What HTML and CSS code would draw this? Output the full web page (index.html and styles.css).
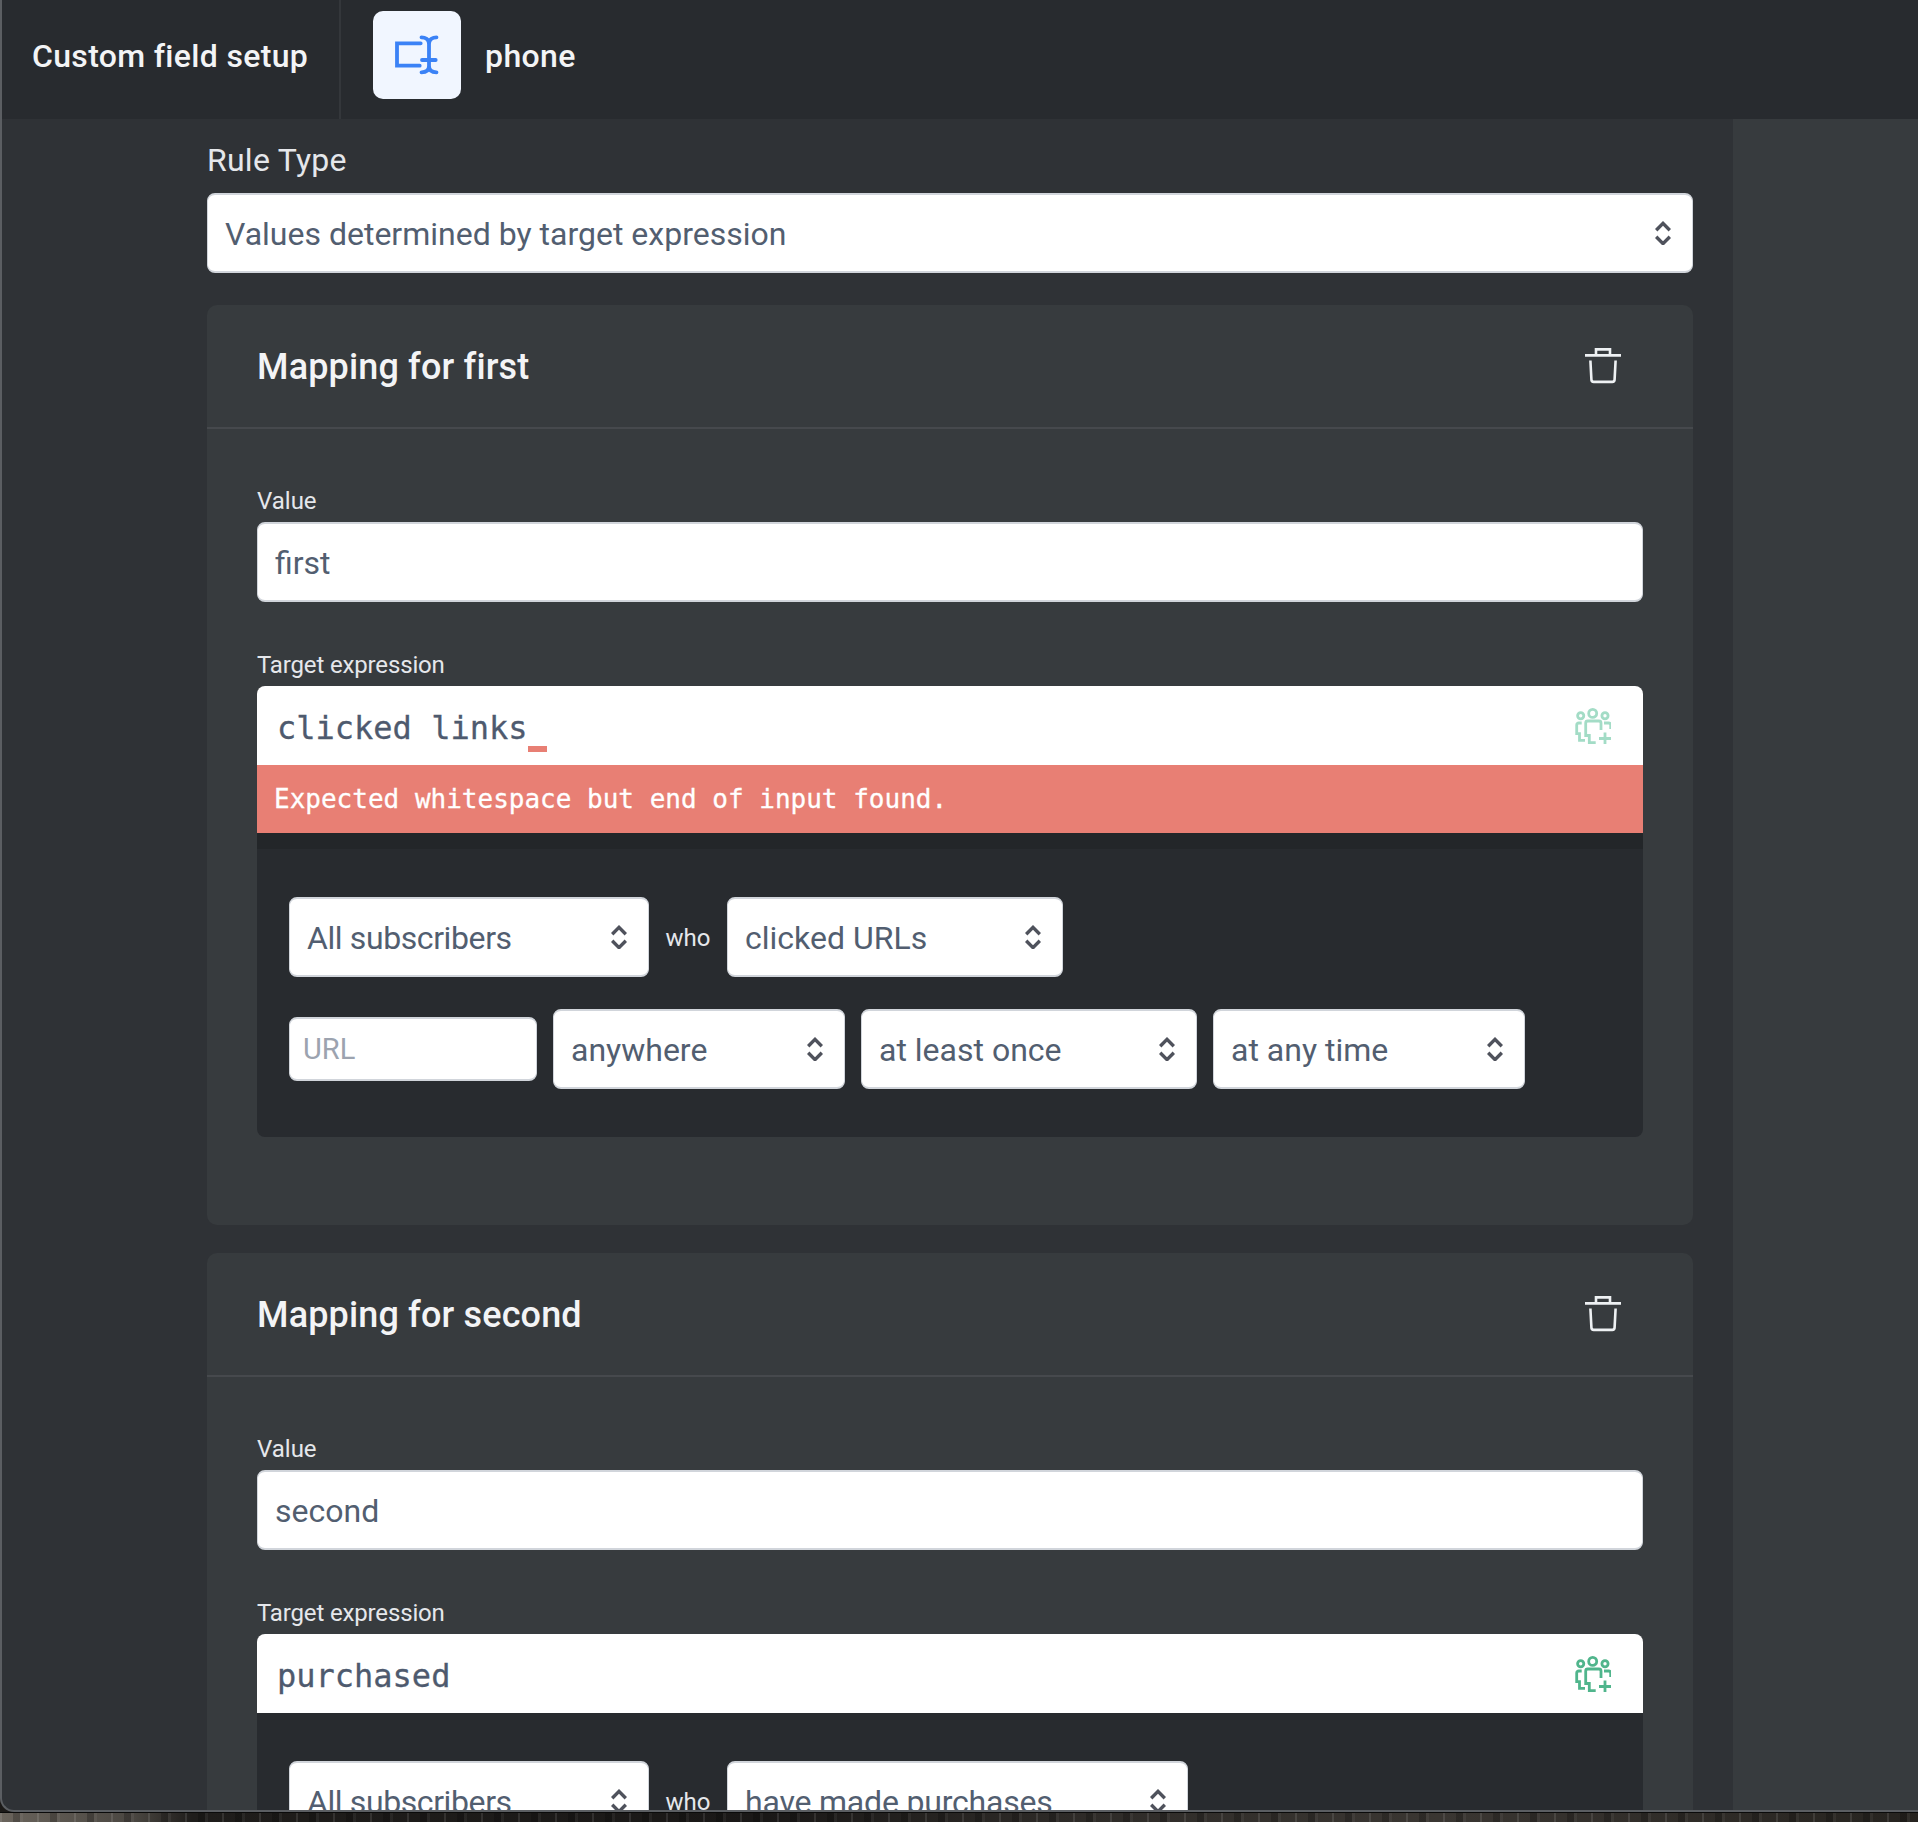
FILE: index.html
```html
<!DOCTYPE html>
<html lang="en">
<head>
<meta charset="utf-8">
<title>Custom field setup</title>
<link rel="stylesheet" href="styles.css">
</head>
<body>
<svg class="defs" width="0" height="0" aria-hidden="true">
  <symbol id="chev" viewBox="0 0 16 24"><path d="M1.2 9.3 8 2.4l6.8 6.9M1.2 15.7 8 22.6l6.8-6.9" fill="none" stroke="currentColor" stroke-width="3.4"/></symbol>
  <symbol id="trash" viewBox="0 0 36 36"><path d="M0 7.4h36M11 7V1.4h14V7M5.4 12.5l1 19a2.4 2.4 0 0 0 2.4 2.4h18.4a2.4 2.4 0 0 0 2.4-2.4l1-19" fill="none" stroke="currentColor" stroke-width="2.6"/></symbol>
  <symbol id="people" viewBox="0 0 36 36"><g fill="none" stroke="currentColor" stroke-width="2.8"><circle cx="17.7" cy="5.4" r="4"/><circle cx="5.7" cy="7.7" r="3.1"/><circle cx="30" cy="7.7" r="3.1"/><path d="M20.7 34.7H14.3V27.5H10.7V15a2 2 0 0 1 2-2H24a2 2 0 0 1 2 2V22M6.7 15H3.7a2 2 0 0 0-2 2V25.7H4.5V32.3H10M29 15h4.7a2 2 0 0 1 2 2v4M30 24.5v12M24 30.5h12"/></g></symbol>
</svg>
<div class="window">
  <header class="topbar">
    <div class="topbar-title">Custom field setup</div>
    <div class="topbar-field">
      <div class="field-badge">
        <svg class="field-icon" viewBox="0 0 88 88"><path d="M47.7 32.3H24V54.7H46.7M48.5 26.3C52 26.3 56 28 56 33V55C56 60 52 61.3 48.5 61.3M63.5 26.3C60 26.3 56 28 56 33M56 55C56 60 60 61.3 63.5 61.3M49 49H62.7" fill="none" stroke="currentColor" stroke-width="3.8" stroke-linecap="round"/></svg>
      </div>
      <span class="field-name">phone</span>
    </div>
  </header>
  <div class="content">
    <main class="main">
      <div class="rule-label">Rule Type</div>
      <div class="select rule-select"><span>Values determined by target expression</span><svg class="chev"><use href="#chev"/></svg></div>

      <section class="card">
        <div class="card-head">
          <h2>Mapping for first</h2>
          <svg class="trash"><use href="#trash"/></svg>
        </div>
        <div class="card-body">
          <div class="label">Value</div>
          <div class="text-input">first</div>
          <div class="label label-target">Target expression</div>
          <div class="editor">
            <span class="code">clicked links<span class="err-mark"></span></span>
            <svg class="people faded"><use href="#people"/></svg>
          </div>
          <div class="error">Expected whitespace but end of input found.</div>
          <div class="builder builder-after-error">
            <div class="row">
              <div class="select w-all"><span>All subscribers</span><svg class="chev"><use href="#chev"/></svg></div>
              <span class="who">who</span>
              <div class="select w-clicked"><span>clicked URLs</span><svg class="chev"><use href="#chev"/></svg></div>
            </div>
            <div class="row">
              <div class="url-input">URL</div>
              <div class="select w-anywhere"><span>anywhere</span><svg class="chev"><use href="#chev"/></svg></div>
              <div class="select w-once"><span>at least once</span><svg class="chev"><use href="#chev"/></svg></div>
              <div class="select w-time"><span>at any time</span><svg class="chev"><use href="#chev"/></svg></div>
            </div>
          </div>
        </div>
      </section>

      <section class="card card-next">
        <div class="card-head">
          <h2>Mapping for second</h2>
          <svg class="trash"><use href="#trash"/></svg>
        </div>
        <div class="card-body">
          <div class="label">Value</div>
          <div class="text-input">second</div>
          <div class="label label-target">Target expression</div>
          <div class="editor">
            <span class="code">purchased</span>
            <svg class="people"><use href="#people"/></svg>
          </div>
          <div class="builder">
            <div class="row">
              <div class="select w-all"><span>All subscribers</span><svg class="chev"><use href="#chev"/></svg></div>
              <span class="who">who</span>
              <div class="select w-purchases"><span>have made purchases</span><svg class="chev"><use href="#chev"/></svg></div>
            </div>
          </div>
        </div>
      </section>
    </main>
    <aside class="side"></aside>
  </div>
</div>
<div class="backdrop"></div>
</body>
</html>
```
FILE: styles.css
```css
* { box-sizing: border-box; }
html, body { margin: 0; height: 1822px; overflow: hidden; }
body {
  background: #1c1a18;
  font-family: Roboto, "Noto Sans", sans-serif;
  color: #e5e7eb;
}
.defs { position: absolute; }
.window {
  height: 1812px;
  border-left: 2px solid #5b5e62;
  border-bottom: 2px solid #5b5e62;
  border-bottom-left-radius: 14px;
  background: #2f3236;
  overflow: hidden;
  display: flex;
  flex-direction: column;
}
.topbar {
  height: 119px;
  flex: none;
  background: #282b2f;
  display: flex;
  align-items: stretch;
}
.topbar-title {
  width: 339px;
  padding: 0 0 7px 30px;
  border-right: 2px solid #34373b;
  display: flex;
  align-items: center;
  font-size: 32px;
  font-weight: 500;
  letter-spacing: .33px;
  color: #f3f4f6;
}
.topbar-field {
  display: flex;
  align-items: center;
  padding: 0 0 7px 32px;
  gap: 24px;
}
.field-badge {
  width: 88px;
  height: 88px;
  border-radius: 10px;
  background: #f1f6ff;
  color: #3b82f6;
  margin-top: -2px;
}
.field-icon { display: block; width: 88px; height: 88px; }
.field-name { font-size: 32px; font-weight: 500; letter-spacing: .4px; color: #f3f4f6; }
.content { flex: 1; display: flex; min-height: 0; }
.main {
  width: 1731px;
  flex: none;
  padding: 21px 40px 0 205px;
}
.side { flex: 1; background: #373b3e; }
.rule-label { font-size: 32px; line-height: 40px; letter-spacing: .25px; color: #e5e7eb; margin-bottom: 13px; }
.select {
  height: 80px;
  flex: none;
  background: #fff;
  border: 2px solid #d1d5db;
  border-left-width: 1px;
  border-right-width: 1px;
  border-radius: 8px;
  padding: 1px 21px 0 17px;
  display: flex;
  align-items: center;
  justify-content: space-between;
  font-size: 32px;
  color: #525e70;
}
.chev { width: 16px; height: 24px; color: #4f525c; flex: none; margin-top: -1px; }
.card {
  margin-top: 32px;
  background: #373b3e;
  border-radius: 10px;
}
.card-next { margin-top: 28px; }
.card-head {
  height: 124px;
  border-bottom: 2px solid #46494d;
  padding: 0 72px 0 50px;
  display: flex;
  align-items: center;
  justify-content: space-between;
}
.card-head h2 {
  margin: 2px 0 0;
  font-size: 36px;
  font-weight: 500;
  letter-spacing: .15px;
  color: #f3f4f6;
}
.trash { width: 36px; height: 36px; color: #eef1f3; }
.card-body { padding: 56px 50px 88px; }
.label { font-size: 24px; line-height: 32px; color: #e5e7eb; margin-bottom: 5px; }
.label-target { margin-top: 47px; margin-bottom: 5px; letter-spacing: -.15px; }
.text-input {
  height: 80px;
  background: #fff;
  border: 2px solid #d1d5db;
  border-left-width: 1px;
  border-right-width: 1px;
  border-radius: 8px;
  padding: 2px 17px 0;
  display: flex;
  align-items: center;
  font-size: 32px;
  color: #525e70;
}
.editor {
  height: 79px;
  background: #fff;
  border-radius: 8px 8px 0 0;
  padding: 0 32px 0 20px;
  display: flex;
  align-items: center;
  justify-content: space-between;
}
.code {
  font-family: "DejaVu Sans Mono", monospace;
  font-size: 32px;
  color: #4e5a6e;
  position: relative;
  display: inline-block;
  margin-top: 4px;
  -webkit-text-stroke: 0.3px #4e5a6e;
}
.err-mark {
  position: absolute;
  left: 100%;
  bottom: -5px;
  margin-left: 1px;
  width: 19px;
  height: 6px;
  background: #e87f74;
}
.people { width: 36px; height: 36px; color: #50b58c; }
.people.faded { color: #a3dcc6; }
.error {
  height: 68px;
  background: #e87f74;
  padding-left: 17px;
  display: flex;
  align-items: center;
  font-family: "DejaVu Sans Mono", monospace;
  font-size: 26px;
  color: #fff;
  -webkit-text-stroke: 0.3px #fff;
}
.builder {
  background: #282b2f;
  border-radius: 0 0 8px 8px;
  padding: 48px 32px 48px;
  display: flex;
  flex-direction: column;
  gap: 32px;
}
.builder-after-error {
  border-top: 16px solid #232629;
}
.row { display: flex; align-items: center; gap: 16px; }
.who { font-size: 24px; color: #e5e7eb; width: 46px; text-align: center; padding-top: 1px; }
.url-input {
  width: 248px;
  height: 64px;
  flex: none;
  background: #fff;
  border: 2px solid #d1d5db;
  border-left-width: 1px;
  border-right-width: 1px;
  border-radius: 8px;
  padding: 0 13px;
  display: flex;
  align-items: center;
  font-size: 29px;
  color: #9ca3af;
}
.w-all { width: 360px; letter-spacing: -.4px; }
.w-clicked { width: 336px; }
.w-purchases { width: 461px; letter-spacing: -.2px; }
.w-anywhere { width: 292px; }
.w-once { width: 336px; }
.w-time { width: 312px; }
.backdrop {
  height: 10px;
  border-top: 1px solid #0a0a0a;
  background:
    repeating-linear-gradient(90deg, rgba(255,255,255,.10) 0 2px, transparent 2px 13px, rgba(0,0,0,.22) 13px 20px, rgba(255,255,255,.05) 20px 23px, transparent 23px 37px),
    linear-gradient(90deg, #6a645c 0, #4a4641 7%, #1f1d1b 10%, #1a1817 40%, #2d2a27 55%, #3a3632 75%, #26231f 100%);
}
```
